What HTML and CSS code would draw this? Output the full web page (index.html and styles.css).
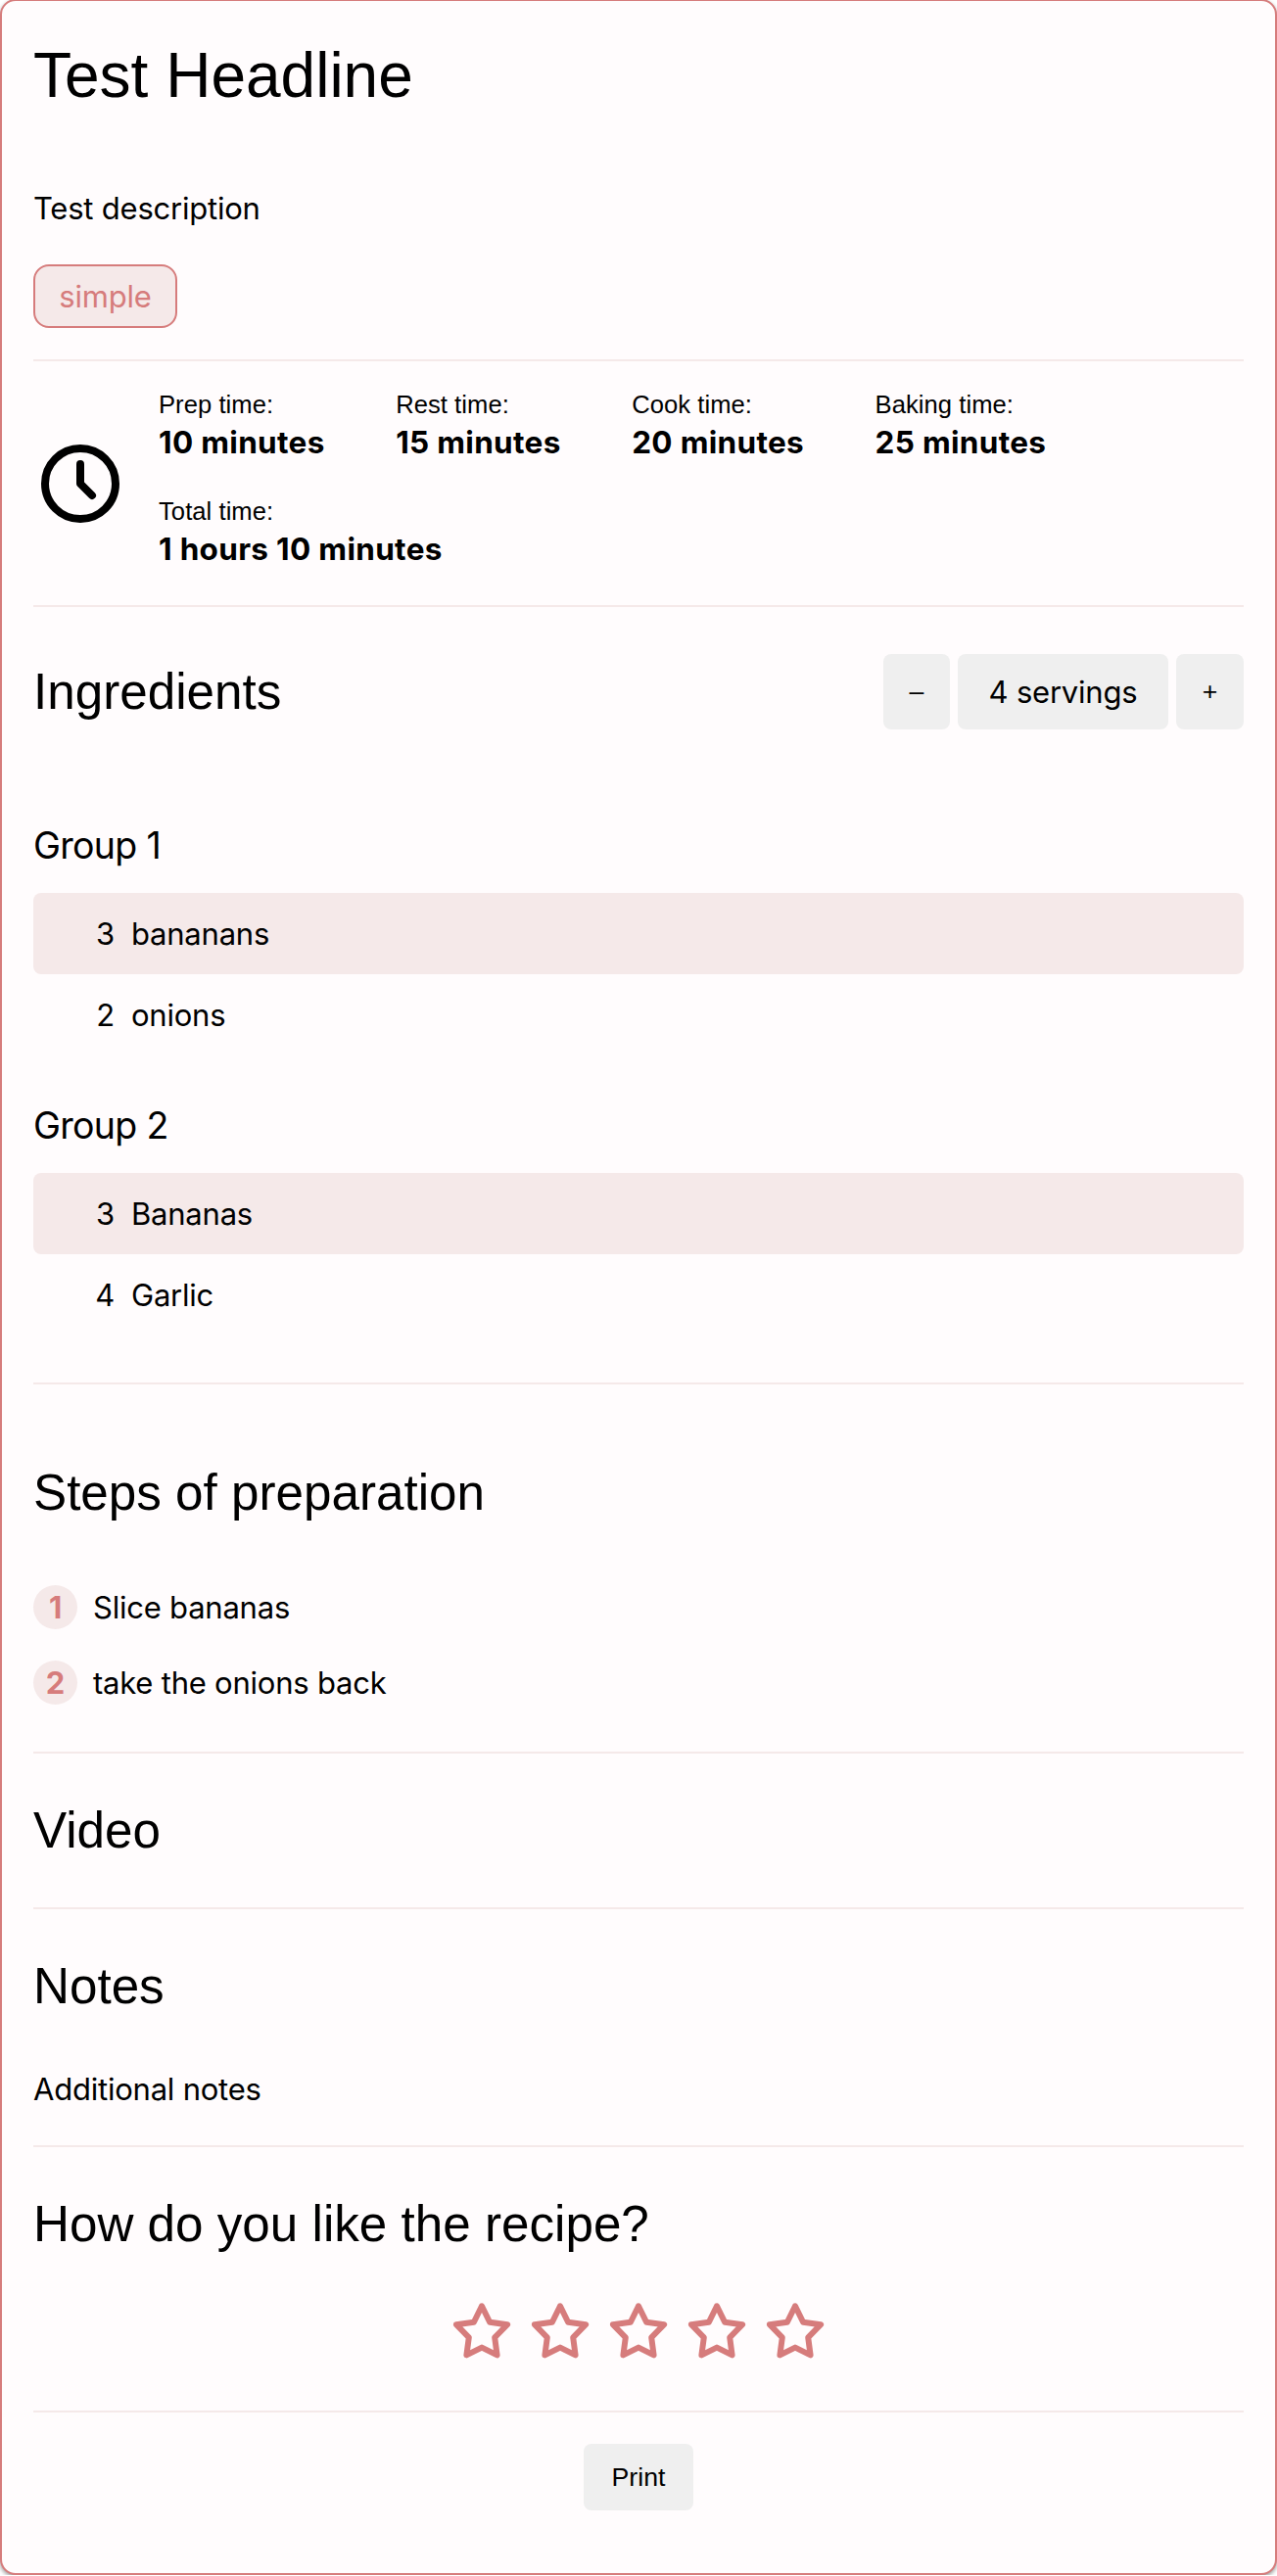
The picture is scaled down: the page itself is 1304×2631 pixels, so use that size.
FILE: index.html
```html
<!DOCTYPE html>
<html lang="en">
<head>
<meta charset="utf-8">
<title>Test Headline</title>
<link rel="stylesheet" href="styles.css">
</head>
<body>
<article class="recipe">
  <h1 class="title">Test Headline</h1>
  <p class="description">Test description</p>
  <span class="badge">simple</span>

  <section class="timings">
    <svg class="clock" viewBox="0 0 24 24" fill="none" stroke="currentColor" stroke-width="2" stroke-linecap="round" stroke-linejoin="round"><circle cx="12" cy="12" r="9"/><path d="M12 7v5l3 3"/></svg>
    <dl class="times">
      <div class="time"><dt>Prep time:</dt><dd>10 minutes</dd></div>
      <div class="time"><dt>Rest time:</dt><dd>15 minutes</dd></div>
      <div class="time"><dt>Cook time:</dt><dd>20 minutes</dd></div>
      <div class="time"><dt>Baking time:</dt><dd>25 minutes</dd></div>
      <div class="time"><dt>Total time:</dt><dd>1 hours 10 minutes</dd></div>
    </dl>
  </section>

  <section class="ingredients">
    <header class="ingredients-head">
      <h2 class="heading">Ingredients</h2>
      <div class="servings">
        <button class="btn btn-minus">–</button>
        <div class="servings-count">4 servings</div>
        <button class="btn btn-plus">+</button>
      </div>
    </header>
    <h3 class="group">Group 1</h3>
    <ul class="list">
      <li><span class="amount">3</span><span>bananans</span></li>
      <li><span class="amount">2</span><span>onions</span></li>
    </ul>
    <h3 class="group">Group 2</h3>
    <ul class="list">
      <li><span class="amount">3</span><span>Bananas</span></li>
      <li><span class="amount">4</span><span>Garlic</span></li>
    </ul>
  </section>

  <section class="steps">
    <h2 class="heading">Steps of preparation</h2>
    <ol class="step-list">
      <li><span class="num">1</span><span>Slice bananas</span></li>
      <li><span class="num">2</span><span>take the onions back</span></li>
    </ol>
  </section>

  <section class="video">
    <h2 class="heading">Video</h2>
  </section>

  <section class="notes">
    <h2 class="heading">Notes</h2>
    <p class="note">Additional notes</p>
  </section>

  <section class="rating">
    <h2 class="heading">How do you like the recipe?</h2>
    <div class="stars">
      <svg class="star" viewBox="0 0 24 24"><use href="#star"/></svg>
      <svg class="star" viewBox="0 0 24 24"><use href="#star"/></svg>
      <svg class="star" viewBox="0 0 24 24"><path id="star" d="M12 3.1 L9.3 8.6 L3.3 9.4 L7.6 13.8 L6.8 19.8 L12 17.2 L17.2 19.8 L16.4 13.8 L20.7 9.4 L14.7 8.6 Z"/></svg>
      <svg class="star" viewBox="0 0 24 24"><use href="#star"/></svg>
      <svg class="star" viewBox="0 0 24 24"><use href="#star"/></svg>
    </div>
  </section>

  <footer class="actions">
    <button class="btn btn-print">Print</button>
  </footer>
</article>
</body>
</html>
```

FILE: styles.css
```css
* { box-sizing: border-box; margin: 0; padding: 0; }

body {
  background: #fff;
  color: #000;
  font: 31px/48px Inter, "Noto Sans", sans-serif;
  letter-spacing: -0.22px;
  overflow: hidden;
}

.recipe {
  height: 2631px;
  margin-top: -1px;
  padding: 32px 32px 0;
  border: 2px solid #d67c7c;
  border-radius: 16px;
  background: #fffcfd;
  box-shadow: 0 2px 4px rgba(0, 0, 0, 0.4);
}

.title, .heading {
  font-family: "Liberation Sans", Arial, sans-serif;
  font-weight: 400;
  letter-spacing: 0;
}
.title { font-size: 64px; line-height: 88px; }
.heading { font-size: 51.2px; line-height: 72px; }

.description { margin-top: 68px; }

.badge {
  display: block;
  width: 147px;
  height: 65px;
  margin-top: 33px;
  border: 2px solid #d67c7c;
  border-radius: 16px;
  background: #f5e9e9;
  color: #d67c7c;
  line-height: 62px;
  text-align: center;
}

.timings {
  display: flex;
  align-items: center;
  gap: 32px;
  height: 253px;
  margin-top: 32px;
  border-top: 2px solid #f5e9e9;
  border-bottom: 2px solid #f5e9e9;
}
.clock { width: 96px; height: 96px; }
.times {
  display: flex;
  flex: 1;
  flex-wrap: wrap;
  gap: 32px 72.5px;
  padding-bottom: 11px;
}
.time dt { font: 25.6px/37px "Liberation Sans", Arial, sans-serif; letter-spacing: 0.05px; }
.time dd { font-size: 31.5px; font-weight: 700; line-height: 40px; letter-spacing: 0.32px; }

.ingredients {
  height: 794px;
  border-bottom: 2px solid #f5e9e9;
}
.ingredients-head {
  display: flex;
  justify-content: space-between;
  align-items: center;
  padding-top: 48px;
  margin-bottom: 89px;
}
.servings { display: flex; gap: 8px; }
.btn {
  border: 0;
  border-radius: 8px;
  background: #efefef;
  color: #000;
  font: 26.67px/30px "Liberation Sans", Arial, sans-serif;
}
.btn-minus { width: 68px; padding-bottom: 2px; }
.btn-plus { width: 69px; padding-bottom: 2px; }
.servings-count {
  width: 215px;
  height: 77px;
  border-radius: 8px;
  background: #efefef;
  line-height: 78px;
  text-align: center;
}

.group {
  height: 62px;
  margin-bottom: 16px;
  font-size: 37.5px;
  font-weight: 400;
  line-height: 60px;
  letter-spacing: -0.7px;
}
.list { margin-bottom: 42px; list-style: none; }
.list li {
  display: flex;
  gap: 17px;
  height: 83px;
  border-radius: 8px;
  line-height: 83px;
}
.list li:nth-child(odd) { background: #f5e9e9; }
.amount { width: 83px; text-align: right; }

.steps { height: 377px; padding-top: 75px; border-bottom: 2px solid #f5e9e9; }
.step-list { margin-top: 58px; list-style: none; }
.step-list li {
  display: flex;
  gap: 16px;
  margin-bottom: 32px;
  line-height: 45px;
}
.num {
  width: 45px;
  height: 45px;
  border-radius: 50%;
  background: #f5e9e9;
  color: #d67c7c;
  font-weight: 700;
  text-align: center;
}

.video { height: 159px; padding-top: 43px; border-bottom: 2px solid #f5e9e9; }
.notes { height: 243px; padding-top: 43px; border-bottom: 2px solid #f5e9e9; }
.note { margin-top: 45px; }

.rating { height: 271px; padding-top: 43px; border-bottom: 2px solid #f5e9e9; }
.stars { display: flex; justify-content: center; gap: 8px; margin-top: 38px; }
.star {
  width: 72px;
  height: 72px;
  fill: none;
  stroke: #d67c7c;
  stroke-width: 2;
  stroke-linejoin: round;
}

.actions { display: flex; justify-content: center; padding-top: 32px; }
.btn-print { width: 112px; height: 68px; }
```
